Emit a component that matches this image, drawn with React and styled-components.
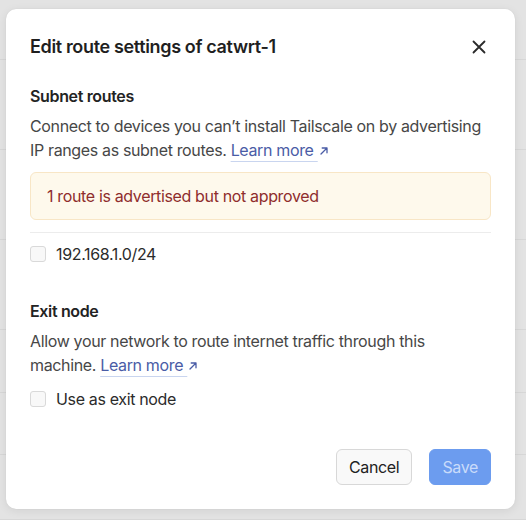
import React from "react";
import styled, { createGlobalStyle } from "styled-components";

const GlobalStyle = createGlobalStyle`
  html, body {
    margin: 0;
    padding: 0;
    background: #e3e3e3;
    font-family: Inter, "Noto Sans", sans-serif;
    letter-spacing: -0.022em;
    -webkit-font-smoothing: antialiased;
  }
  * {
    box-sizing: border-box;
  }
`;

const backdropRows = [60, 90, 90, 90, 63, 62, 65];

function ExternalArrow() {
  return (
    <svg width="10" height="10" viewBox="0 0 10 10" fill="none">
      <path
        d="M2 8L8 2M3.2 2H8V6.8"
        stroke="currentColor"
        strokeWidth="1.3"
        strokeLinecap="round"
        strokeLinejoin="round"
      />
    </svg>
  );
}

function CloseIcon() {
  return (
    <svg width="14" height="14" viewBox="0 0 14 14" fill="none">
      <path
        d="M1.5 1.5L12.5 12.5M12.5 1.5L1.5 12.5"
        stroke="currentColor"
        strokeWidth="1.8"
        strokeLinecap="round"
      />
    </svg>
  );
}

function App() {
  return (
    <Page>
      <GlobalStyle />
      <Backdrop>
        {backdropRows.map((h, i) => (
          <BackdropRow key={i} $height={h} />
        ))}
      </Backdrop>
      <Overlay>
        <Dialog>
          <Header>
            <Title>Edit route settings of catwrt-1</Title>
            <CloseButton aria-label="Close">
              <CloseIcon />
            </CloseButton>
          </Header>

          <Section>
            <SectionTitle>Subnet routes</SectionTitle>
            <Description>
              Connect to devices you can’t install Tailscale on by advertising
              IP ranges as subnet routes.{" "}
              <LearnMore href="#">
                Learn more <ExternalArrow />
              </LearnMore>
            </Description>
            <Alert>1 route is advertised but not approved</Alert>
            <Divider />
            <CheckRow $top={9}>
              <Checkbox type="checkbox" />
              <span>192.168.1.0/24</span>
            </CheckRow>
          </Section>

          <Section $gap={33}>
            <SectionTitle>Exit node</SectionTitle>
            <Description>
              Allow your network to route internet traffic through this
              machine.{" "}
              <LearnMore href="#">
                Learn more <ExternalArrow />
              </LearnMore>
            </Description>
            <CheckRow $top={10}>
              <Checkbox type="checkbox" />
              <span>Use as exit node</span>
            </CheckRow>
          </Section>

          <Footer>
            <Button>Cancel</Button>
            <Button $primary disabled>
              Save
            </Button>
          </Footer>
        </Dialog>
      </Overlay>
    </Page>
  );
}
export default App;

const Page = styled.div`
  position: relative;
  width: 526px;
  height: 520px;
  overflow: hidden;
`;

const Backdrop = styled.div`
  display: flex;
  flex-direction: column;
`;

const BackdropRow = styled.div`
  height: ${({ $height }) => $height}px;
  border-bottom: 1px solid #d7d7d7;
`;

const Overlay = styled.div`
  position: absolute;
  inset: 0;
  padding: 9px 11px 11px 6px;
`;

const Dialog = styled.div`
  width: 509px;
  height: 500px;
  background: #ffffff;
  border-radius: 10px;
  box-shadow: 0 2px 10px rgba(0, 0, 0, 0.08), 0 0 1px rgba(0, 0, 0, 0.12);
  padding: 24px;
  display: flex;
  flex-direction: column;
`;

const Header = styled.div`
  display: flex;
  align-items: center;
  justify-content: space-between;
  height: 28px;
`;

const Title = styled.h2`
  margin: 0;
  font-size: 18px;
  line-height: 28px;
  font-weight: 600;
  color: #1f1f1f;
`;

const CloseButton = styled.button`
  border: none;
  background: none;
  padding: 0;
  margin-right: 5px;
  width: 14px;
  height: 14px;
  color: #2a2a2a;
  display: flex;
  cursor: pointer;
`;

const Section = styled.div`
  margin-top: ${({ $gap }) => $gap || 23}px;
  display: flex;
  flex-direction: column;
`;

const SectionTitle = styled.h3`
  margin: 0;
  font-size: 16px;
  line-height: 24px;
  font-weight: 600;
  color: #232323;
`;

const Description = styled.p`
  margin: 6px 0 0;
  font-size: 16px;
  line-height: 24px;
  color: #474747;
`;

const LearnMore = styled.a`
  color: #4a5ca6;
  white-space: nowrap;
  text-decoration: underline;
  text-decoration-color: #c9d5ef;
  text-decoration-thickness: 1px;
  text-underline-offset: 5px;
  svg {
    margin-left: 1px;
  }
`;

const Alert = styled.div`
  margin-top: 10px;
  height: 48px;
  display: flex;
  align-items: center;
  padding: 0 16px;
  background: #fef9ec;
  border: 1px solid #f8e6c6;
  border-radius: 6px;
  color: #8f2d2d;
  font-size: 16px;
  line-height: 24px;
`;

const Divider = styled.hr`
  margin: 12px 0 0;
  border: none;
  border-top: 1px solid #ececec;
`;

const CheckRow = styled.label`
  margin-top: ${({ $top }) => $top ?? 8}px;
  display: flex;
  align-items: center;
  gap: 10px;
  font-size: 16px;
  line-height: 24px;
  color: #2b2b2b;
`;

const Checkbox = styled.input`
  appearance: none;
  margin: 0;
  width: 16px;
  height: 16px;
  border: 1px solid #d9d9d9;
  border-radius: 3px;
  background: #f8f8f8;
`;

const Footer = styled.div`
  margin-top: auto;
  display: flex;
  justify-content: flex-end;
  gap: 17px;
`;

const Button = styled.button`
  height: 36px;
  padding: 0 12px;
  border-radius: 6px;
  font-family: inherit;
  font-size: 16px;
  font-weight: 400;
  letter-spacing: inherit;
  border: 1px solid ${({ $primary }) => ($primary ? "#6c9cef" : "#d8d8d8")};
  background: ${({ $primary }) => ($primary ? "#6c9cef" : "#f9f9f9")};
  color: ${({ $primary }) => ($primary ? "#c9dbfa" : "#222222")};
  cursor: pointer;
`;
